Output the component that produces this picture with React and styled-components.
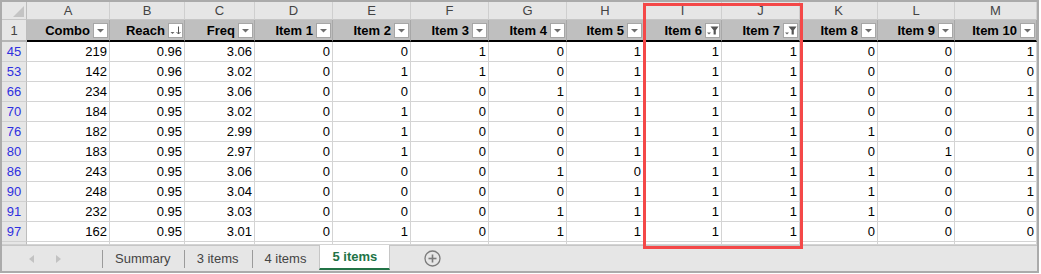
import React from 'react';
import styled, { createGlobalStyle } from 'styled-components';

const GlobalStyle = createGlobalStyle`
  body {
    margin: 0;
    background: #fff;
    font-family: "Liberation Sans", Arial, sans-serif;
  }
`;

const COLS = '25px 83px 75px 70px 78px 78px 78px 78px 77px 78px 78px 78px 77px 82px';
const LETTERS = ['A', 'B', 'C', 'D', 'E', 'F', 'G', 'H', 'I', 'J', 'K', 'L', 'M'];

const headers = [
  { label: 'Combo', icon: 'drop' },
  { label: 'Reach', icon: 'sort' },
  { label: 'Freq', icon: 'drop' },
  { label: 'Item 1', icon: 'drop' },
  { label: 'Item 2', icon: 'drop' },
  { label: 'Item 3', icon: 'drop' },
  { label: 'Item 4', icon: 'drop' },
  { label: 'Item 5', icon: 'drop' },
  { label: 'Item 6', icon: 'filter' },
  { label: 'Item 7', icon: 'filter' },
  { label: 'Item 8', icon: 'drop' },
  { label: 'Item 9', icon: 'drop' },
  { label: 'Item 10', icon: 'drop' },
];

const rows = [
  [45, 219, '0.96', '3.06', 0, 0, 1, 0, 1, 1, 1, 0, 0, 1],
  [53, 142, '0.96', '3.02', 0, 1, 1, 0, 1, 1, 1, 0, 0, 0],
  [66, 234, '0.95', '3.06', 0, 0, 0, 1, 1, 1, 1, 0, 0, 1],
  [70, 184, '0.95', '3.02', 0, 1, 0, 0, 1, 1, 1, 0, 0, 1],
  [76, 182, '0.95', '2.99', 0, 1, 0, 0, 1, 1, 1, 1, 0, 0],
  [80, 183, '0.95', '2.97', 0, 1, 0, 0, 1, 1, 1, 0, 1, 0],
  [86, 243, '0.95', '3.06', 0, 0, 0, 1, 0, 1, 1, 1, 0, 1],
  [90, 248, '0.95', '3.04', 0, 0, 0, 0, 1, 1, 1, 1, 0, 1],
  [91, 232, '0.95', '3.03', 0, 0, 0, 1, 1, 1, 1, 1, 0, 0],
  [97, 162, '0.95', '3.01', 0, 1, 0, 1, 1, 1, 1, 0, 0, 0],
];

const tabs = ['Summary', '3 items', '4 items', '5 items'];

function FilterIcon({ kind }) {
  if (kind === 'sort') {
    return (
      <svg width="13" height="13" viewBox="0 0 13 13">
        <polygon points="1.5,8 5.5,8 3.5,10" fill="#666" />
        <line x1="9.5" y1="2.5" x2="9.5" y2="10" stroke="#555" strokeWidth="1" />
        <polyline points="7.5,8 9.5,10 11.5,8" fill="none" stroke="#555" strokeWidth="1" />
      </svg>
    );
  }
  if (kind === 'filter') {
    return (
      <svg width="13" height="13" viewBox="0 0 13 13">
        <polygon points="1,8.5 5,8.5 3,10.5" fill="#666" />
        <polygon points="4.5,2.5 12.5,2.5 9.8,6.2 9.8,10.5 7.6,10.5 7.6,6.2" fill="#555" />
      </svg>
    );
  }
  return (
    <svg width="13" height="13" viewBox="0 0 13 13">
      <polygon points="3,5 10,5 6.5,8.5" fill="#6e6e6e" />
    </svg>
  );
}

export default function App() {
  return (
    <>
      <GlobalStyle />
      <Frame>
        <Sheet>
          <Row h={18}>
            <Corner />
            {LETTERS.map((l) => (
              <ColLetter key={l}>{l}</ColLetter>
            ))}
          </Row>
          <Row h={22}>
            <RowHead header>1</RowHead>
            {headers.map((h) => (
              <HeadCell key={h.label}>
                {h.label}
                <FilterButton>
                  <FilterIcon kind={h.icon} />
                </FilterButton>
              </HeadCell>
            ))}
          </Row>
          {rows.map(([num, ...vals]) => (
            <Row h={20} key={num}>
              <RowHead>{num}</RowHead>
              {vals.map((v, i) => (
                <Cell key={i}>{v}</Cell>
              ))}
            </Row>
          ))}
          <Row h={3}>
            <RowHead />
            {LETTERS.map((l) => (
              <Cell key={l} />
            ))}
          </Row>
        </Sheet>

        <TabBar>
          <Nav>
            <NavArrow dir="left" />
            <NavArrow dir="right" />
          </Nav>
          {tabs.map((t) => (
            <Tab key={t} active={t === '5 items'}>
              {t}
            </Tab>
          ))}
          <AddSheet>
            <svg width="17" height="17" viewBox="0 0 17 17">
              <circle cx="8.5" cy="8.5" r="7.5" fill="none" stroke="#7b7b7b" strokeWidth="1.3" />
              <line x1="8.5" y1="4.5" x2="8.5" y2="12.5" stroke="#7b7b7b" strokeWidth="1.6" />
              <line x1="4.5" y1="8.5" x2="12.5" y2="8.5" stroke="#7b7b7b" strokeWidth="1.6" />
            </svg>
          </AddSheet>
        </TabBar>

        <Highlight />
      </Frame>
    </>
  );
}

const Frame = styled.div`
  position: relative;
  box-sizing: border-box;
  width: 1039px;
  height: 273px;
  border: 2px solid #ababab;
  display: flex;
  flex-direction: column;
  overflow: hidden;
  background: #fff;
`;

const Sheet = styled.div`
  display: flex;
  flex-direction: column;
`;

const Row = styled.div`
  display: grid;
  grid-template-columns: ${COLS};
  height: ${(p) => p.h}px;
  font-size: 13px;
`;

const Corner = styled.div`
  position: relative;
  box-sizing: border-box;
  background: #e6e6e6;
  border-right: 1px solid #bdbdbd;
  border-bottom: 1px solid #c6c6c6;
  &::after {
    content: '';
    position: absolute;
    right: 2px;
    bottom: 2px;
    width: 0;
    height: 0;
    border-left: 11px solid transparent;
    border-bottom: 11px solid #c4c4c4;
  }
`;

const ColLetter = styled.div`
  box-sizing: border-box;
  background: #e6e6e6;
  color: #444;
  border-right: 1px solid #cfcfcf;
  border-bottom: 1px solid #c6c6c6;
  display: flex;
  align-items: center;
  justify-content: center;
`;

const RowHead = styled.div`
  box-sizing: border-box;
  background: #e6e6e6;
  color: ${(p) => (p.header ? '#444' : '#2f2fe0')};
  border-right: 1px solid #bdbdbd;
  border-bottom: ${(p) => (p.header ? '2px solid #b5b5b5' : '1px solid #d0d0d0')};
  display: flex;
  align-items: center;
  justify-content: center;
`;

const HeadCell = styled.div`
  box-sizing: border-box;
  background: #bfbfbf;
  color: #000;
  font-weight: bold;
  border-right: 1px solid #a8a8a8;
  border-bottom: 2px solid #000;
  display: flex;
  align-items: center;
  justify-content: flex-end;
  gap: 3px;
  padding-right: 1px;
  white-space: nowrap;
`;

const FilterButton = styled.span`
  box-sizing: border-box;
  width: 15px;
  height: 15px;
  flex: none;
  background: #fff;
  border: 1px solid #a6a6a6;
  display: flex;
  align-items: center;
  justify-content: center;
`;

const Cell = styled.div`
  box-sizing: border-box;
  color: #000;
  border-right: 1px solid #d4d4d4;
  border-bottom: 1px solid #d4d4d4;
  display: flex;
  align-items: center;
  justify-content: flex-end;
  padding-right: 2px;
`;

const TabBar = styled.div`
  flex: 1;
  display: flex;
  align-items: stretch;
  background: #e6e6e6;
  border-top: 1px solid #c6c6c6;
  font-size: 13px;
`;

const Nav = styled.div`
  width: 100px;
  display: flex;
  align-items: center;
  padding-left: 27px;
  gap: 22px;
  box-sizing: border-box;
`;

const NavArrow = styled.span`
  width: 0;
  height: 0;
  border-top: 4px solid transparent;
  border-bottom: 4px solid transparent;
  ${(p) =>
    p.dir === 'left'
      ? 'border-right: 5px solid #c2c2c2;'
      : 'border-left: 5px solid #c2c2c2;'}
`;

const Tab = styled.div`
  position: relative;
  display: flex;
  align-items: center;
  padding: 0 13px;
  color: ${(p) => (p.active ? '#217346' : '#444')};
  font-weight: ${(p) => (p.active ? 'bold' : 'normal')};
  background: ${(p) => (p.active ? '#fff' : 'transparent')};
  box-sizing: border-box;
  ${(p) =>
    p.active
      ? `
    margin-top: -1px;
    padding: 0 12px;
    border-left: 1px solid #c6c6c6;
    border-right: 1px solid #c6c6c6;
    border-bottom: 2px solid #217346;
    margin-bottom: 1px;
  `
      : `
    &::before {
      content: '';
      position: absolute;
      left: 0;
      top: 4px;
      bottom: 3px;
      width: 1px;
      background: #9b9b9b;
    }
  `}
`;

const AddSheet = styled.div`
  display: flex;
  align-items: center;
  margin-left: 34px;
`;

const Highlight = styled.div`
  position: absolute;
  left: 641px;
  top: 1px;
  width: 160px;
  height: 246px;
  box-sizing: border-box;
  border: 3px solid #f44848;
  pointer-events: none;
`;
